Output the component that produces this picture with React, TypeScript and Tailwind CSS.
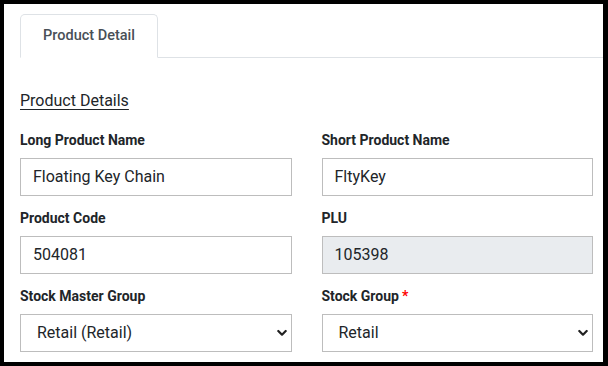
import React from "react";

const Chevron = () => (
  <svg
    className="pointer-events-none absolute right-[4px] top-1/2 -translate-y-1/2"
    width="10"
    height="7"
    viewBox="0 0 10 7"
    fill="none"
  >
    <path d="M1.3 1.5 L5 5.2 L8.7 1.5" stroke="#222" strokeWidth="2.2" strokeLinecap="round" strokeLinejoin="round" />
  </svg>
);

const Label = ({ children, required }: { children: React.ReactNode; required?: boolean }) => (
  <div className="text-[14px] leading-[21px] font-bold text-[#212529] mb-[7px]">
    {children}
    {required && <span className="text-[#ff0000] ml-[3px]">*</span>}
  </div>
);

const Input = ({ value, disabled }: { value: string; disabled?: boolean }) => (
  <div
    className={`h-[38px] border border-[#bdbdbd] flex items-center pl-[12px] text-[16px] text-[#212529] ${
      disabled ? "bg-[#e9ecef]" : "bg-white"
    }`}
  >
    {value}
  </div>
);

const Select = ({ value }: { value: string }) => (
  <div className="relative h-[38px] border border-[#bdbdbd] bg-white flex items-center pl-[16px] text-[16px] text-[#212529]">
    {value}
    <Chevron />
  </div>
);

export default function App() {
  return (
    <div className="w-[608px] h-[366px] bg-black pt-[4px] pl-[4px]" style={{ fontFamily: "Roboto, 'Liberation Sans', sans-serif" }}>
      <div className="w-[599px] h-[358px] bg-white overflow-hidden pt-[10px]">
        <div className="ml-[16px] flex border-b border-[#dee2e6]">
          <div className="w-[138px] h-[44px] -mb-px border border-[#dee2e6] border-b-white rounded-t-[5px] bg-white flex items-center justify-center text-[14.5px] font-medium text-[#495057]">
            Product Detail
          </div>
        </div>
        <div className="pl-[16px] pr-[10px] pt-[31px]">
          <div className="text-[16px] leading-[24px] text-[#212529] underline underline-offset-[3px] mb-[17px]">
            Product Details
          </div>
          <div className="grid grid-cols-2 gap-x-[30px] gap-y-[12px]">
            <div>
              <Label>Long Product Name</Label>
              <Input value="Floating Key Chain" />
            </div>
            <div>
              <Label>Short Product Name</Label>
              <Input value="FltyKey" />
            </div>
            <div>
              <Label>Product Code</Label>
              <Input value="504081" />
            </div>
            <div>
              <Label>PLU</Label>
              <Input value="105398" disabled />
            </div>
            <div>
              <Label>Stock Master Group</Label>
              <Select value="Retail (Retail)" />
            </div>
            <div>
              <Label required>Stock Group</Label>
              <Select value="Retail" />
            </div>
          </div>
        </div>
      </div>
    </div>
  );
}
